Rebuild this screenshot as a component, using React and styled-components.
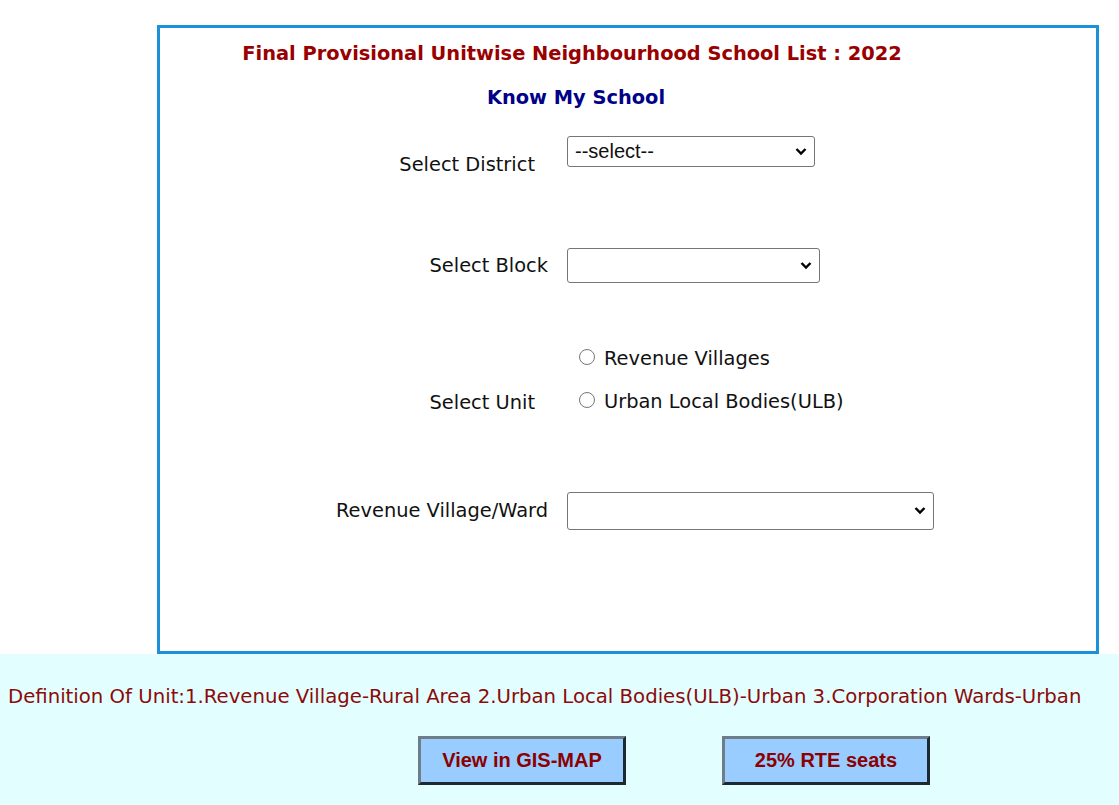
import React from 'react'
import styled, { createGlobalStyle } from 'styled-components'

const GlobalStyle = createGlobalStyle`
  body {
    margin: 0;
    background: #ffffff;
    font-family: "DejaVu Sans", Verdana, sans-serif;
    color: #111;
  }
`

const Page = styled.div`
  width: 1119px;
  min-height: 805px;
  display: flex;
  flex-direction: column;
`

const Top = styled.div`
  padding: 25px 0 0 157px;
`

const Box = styled.div`
  box-sizing: border-box;
  width: 942px;
  height: 629px;
  border: 3px solid #1c91da;
`

const Header = styled.div`
  width: 824px;
  padding-top: 14px;
  text-align: center;
`

const Title = styled.div`
  font-size: 19.4px;
  font-weight: bold;
  line-height: 24px;
  color: #990000;
`

const SubTitle = styled.div`
  margin-top: 20px;
  padding-left: 8px;
  font-size: 19.4px;
  font-weight: bold;
  line-height: 24px;
  color: #000088;
`

const Row = styled.div`
  display: flex;
  align-items: ${(p) => p.$align || 'center'};
  margin-top: ${(p) => p.$mt}px;
  height: ${(p) => (p.$h ? `${p.$h}px` : 'auto')};
  column-gap: 19px;
`

const Label = styled.div`
  box-sizing: border-box;
  width: 388px;
  padding-right: ${(p) => p.$trail || 0}px;
  padding-top: ${(p) => p.$top || 0}px;
  margin-bottom: ${(p) => p.$drop ? -p.$drop : 0}px;
  text-align: right;
  font-size: 19.4px;
  line-height: 24px;
`

const SelectWrap = styled.div`
  position: relative;
  box-sizing: border-box;
  width: ${(p) => p.$w}px;
  height: ${(p) => p.$h}px;
  border: 1px solid #767676;
  border-radius: 3px;
  background: #fff;
  font-family: "Liberation Sans", Arial, sans-serif;
  font-size: 20px;
  display: flex;
  align-items: center;
  padding-left: 7px;
`

const Chevron = styled.svg`
  position: absolute;
  right: 7px;
  top: 50%;
  margin-top: -5px;
`

const Select = ({ w, h, value }) => (
  <SelectWrap $w={w} $h={h}>
    {value}
    <Chevron width="12" height="9" viewBox="0 0 12 9">
      <path d="M1.5 2 L6 6.5 L10.5 2" fill="none" stroke="#000" strokeWidth="2.4" />
    </Chevron>
  </SelectWrap>
)

const RadioGroup = styled.div`
  display: flex;
  flex-direction: column;
  row-gap: 19px;
  padding-left: 12px;
`

const RadioItem = styled.label`
  display: flex;
  align-items: center;
  column-gap: 9px;
  font-size: 19.4px;
  line-height: 24px;
`

const RadioDot = styled.span`
  box-sizing: border-box;
  width: 16px;
  height: 16px;
  border: 1px solid #767676;
  border-radius: 50%;
  background: #fff;
  margin-top: -4px;
`

const Footer = styled.div`
  flex: 1;
  background: #e2fefe;
  padding: 31px 0 20px 8px;
`

const Note = styled.div`
  font-size: 19.7px;
  line-height: 24px;
  color: #8b0a0a;
  white-space: nowrap;
`

const Buttons = styled.div`
  display: flex;
  column-gap: 96px;
  margin-top: 27px;
  padding-left: 410px;
`

const Button = styled.button`
  box-sizing: border-box;
  width: 208px;
  height: 49px;
  background: #99ccff;
  border-style: solid;
  border-width: 3px;
  border-color: #6f7d88 #1c2833 #1c2833 #6f7d88;
  font-family: "Liberation Sans", Arial, sans-serif;
  font-size: 20px;
  font-weight: bold;
  color: #8b0000;
  cursor: pointer;
`

export default function App() {
  return (
    <Page>
      <GlobalStyle />
      <Top>
        <Box>
          <Header>
            <Title>Final Provisional Unitwise Neighbourhood School List : 2022</Title>
            <SubTitle>Know My School</SubTitle>
          </Header>

          <Row $mt={26} $h={40} $align="flex-start">
            <Label $trail={13} $top={17}>Select District</Label>
            <Select w={248} h={31} value="--select--" />
          </Row>

          <Row $mt={72} $h={35}>
            <Label>Select Block</Label>
            <Select w={253} h={35} />
          </Row>

          <Row $mt={64} $align="flex-end">
            <Label $trail={13} $drop={1}>Select Unit</Label>
            <RadioGroup>
              <RadioItem><RadioDot />Revenue Villages</RadioItem>
              <RadioItem><RadioDot />Urban Local Bodies(ULB)</RadioItem>
            </RadioGroup>
          </Row>

          <Row $mt={78} $h={38}>
            <Label>Revenue Village/Ward</Label>
            <Select w={367} h={38} />
          </Row>
        </Box>
      </Top>

      <Footer>
        <Note>
          Definition Of Unit:1.Revenue Village-Rural Area 2.Urban Local Bodies(ULB)-Urban 3.Corporation Wards-Urban
        </Note>
        <Buttons>
          <Button>View in GIS-MAP</Button>
          <Button>25% RTE seats</Button>
        </Buttons>
      </Footer>
    </Page>
  )
}
